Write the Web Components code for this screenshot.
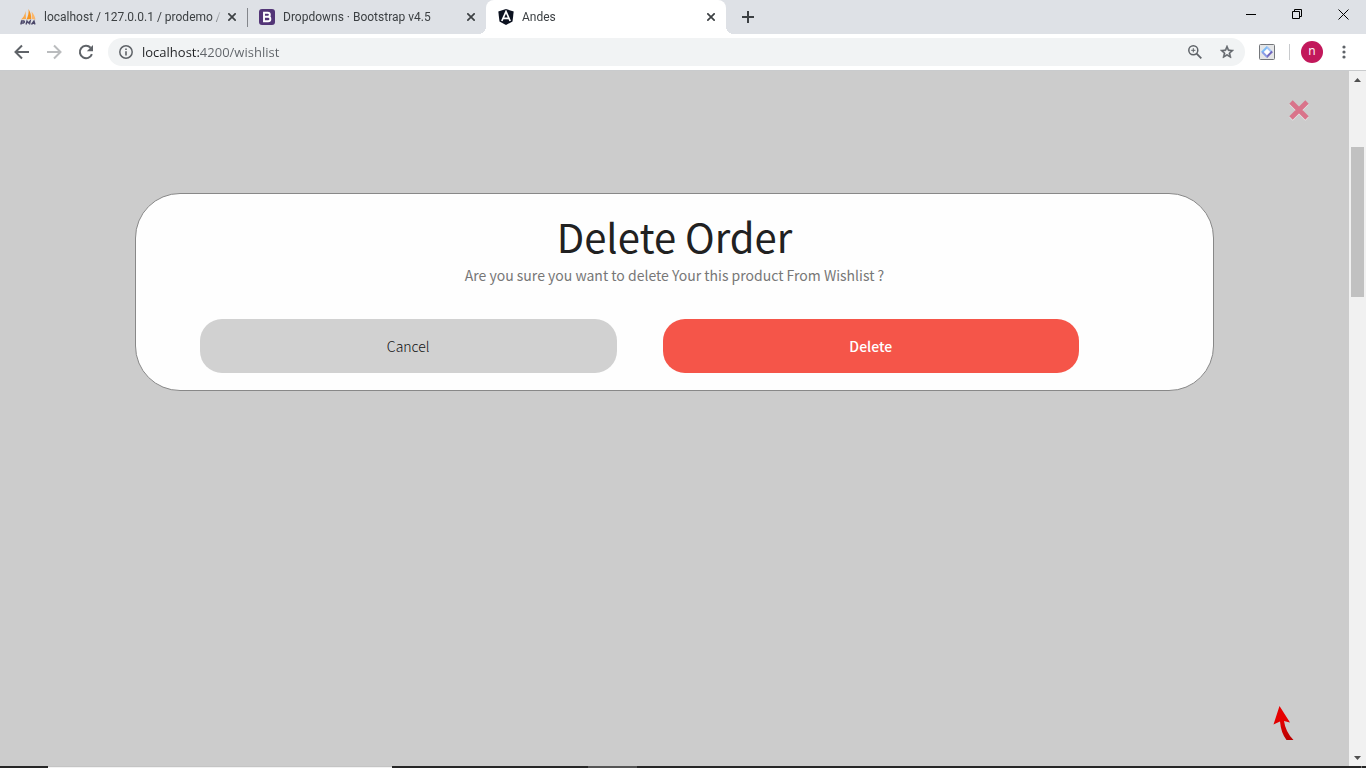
<!DOCTYPE html>
<html lang="en">
<head>
<meta charset="utf-8">
<title>Andes</title>
<style>
  html, body { margin: 0; height: 100%; }
  body { font-family: "Open Sans", "Noto Sans", sans-serif; background: #ccc; overflow: hidden; }
</style>
</head>
<body>
<browser-window>
  <tab-strip slot="tabs">
    <browser-tab label="localhost / 127.0.0.1 / prodemo /" divided>
      <svg slot="icon" width="16" height="16" viewBox="0 0 16 16"><path d="M1 10.500C3 9 5 6 5.500 2L6 10Z" fill="#f9a94b"/><path d="M6.500 10.500C8 7 9 4 8.500 0c2 3 3 7 2.500 10Z" fill="#f7941d"/><path d="M11.500 10C12 7 12 5 11.500 2.500c2 2 3.500 5 4 8Z" fill="#fbb66a"/><path d="M.8 15.500 1.600 12H4q1 1-.5 2H1.500M6 15.500 7 12l1.300 2L10.200 12l-.6 3.500M11.500 15.500 14 12l1 3.500M12.300 14.300h2.500" fill="none" stroke="#4a4668" stroke-width="1.300"/></svg>
    </browser-tab>
    <browser-tab label="Dropdowns · Bootstrap v4.5">
      <svg slot="icon" width="16" height="16" viewBox="0 0 16 16"><rect width="16" height="16" rx="3" fill="#533577"/><path d="M5 3.700h3.800a2 2 0 0 1 0 4.100H5zM5 7.800h4.100a2.200 2.200 0 0 1 0 4.500H5z" fill="none" stroke="#fff" stroke-width="1.900"/></svg>
    </browser-tab>
    <browser-tab label="Andes" active>
      <svg slot="icon" width="16" height="16" viewBox="0 0 16 16"><path d="M8 0 15.700 2.500 14.500 12.500 8 16 1.500 12.500.3 2.500Z" fill="#0c1220"/><path d="M3.800 12 8 2.600 12.200 12M5.500 9.300h5" fill="none" stroke="#fff" stroke-width="1.700"/></svg>
    </browser-tab>
  </tab-strip>
  <browser-toolbar slot="toolbar" url="localhost:4200/wishlist"></browser-toolbar>
  <confirm-overlay>
    <confirm-card>
      <span slot="title">Delete Order</span>
      <span slot="message">Are you sure you want to delete Your this product From Wishlist ?</span>
      <pill-button slot="actions" kind="cancel">Cancel</pill-button>
      <pill-button slot="actions" kind="delete">Delete</pill-button>
    </confirm-card>
  </confirm-overlay>
  <page-scrollbar slot="scrollbar"></page-scrollbar>
  <task-bar slot="taskbar"></task-bar>
</browser-window>

<script>
const RESET = `
  :host, *, *::before, *::after { box-sizing: border-box; }
  button { margin: 0; padding: 0; border: 0; background: none; color: inherit; font: inherit; cursor: pointer; }
  svg { display: block; }
`;
const define = (name, css, html) => customElements.define(name, class extends HTMLElement {
  constructor() {
    super();
    const text = html.replace(/\{(\w+)\}/g, (_, key) => this.getAttribute(key) || '');
    this.attachShadow({ mode: 'open' }).innerHTML = `<style>${RESET}${css}</style>${text}`;
  }
});

define('browser-window', `
  :host { display: grid; height: 100vh; grid-template: auto auto minmax(0, 1fr) auto / minmax(0, 1fr) auto; }
  slot { display: block; min-width: 0; }
  slot[name=tabs], slot[name=toolbar], slot[name=taskbar] { grid-column: 1 / -1; }
  slot:not([name]), slot[name=scrollbar] { display: grid; min-height: 0; }
`, `
  <slot name="tabs"></slot>
  <slot name="toolbar"></slot>
  <slot></slot>
  <slot name="scrollbar"></slot>
  <slot name="taskbar"></slot>
`);

define('tab-strip', `
  :host { display: flex; height: 34px; padding-left: 8px; background: #dee1e6; color: #3c4043; }
  .add { width: 28px; height: 34px; margin-left: 8px; display: grid; place-items: center; }
  .window { margin-left: auto; display: flex; color: #000; }
  .window button { width: 46px; height: 29px; display: grid; place-items: center; }
`, `
  <slot></slot>
  <button class="add" aria-label="New tab"><svg width="12" height="12" viewBox="0 0 12 12"><path d="M6 0v12M0 6h12" stroke="#3c4043" stroke-width="2"/></svg></button>
  <div class="window">
    <button aria-label="Minimize"><svg width="10" height="11"><path d="M0 5.500h10" stroke="#000"/></svg></button>
    <button aria-label="Restore"><svg width="11" height="11" fill="none" stroke="#000"><path d="M.5 2.500h7v7h-7zM2.500 2.500v-2h7v7h-2"/></svg></button>
    <button aria-label="Close"><svg width="11" height="11"><path d="M.5.500l10 10M10.500.500l-10 10" stroke="#000"/></svg></button>
  </div>
`);

define('browser-tab', `
  :host { display: flex; align-items: center; flex: 0 1 239px; min-width: 0; height: 34px; padding: 0 7px 0 12px; position: relative; font-size: 12px; }
  .label { flex: 1; min-width: 0; margin: 0 2px 0 8px; overflow: hidden; white-space: nowrap; line-height: 20px; font-family: Roboto, sans-serif; -webkit-mask-image: linear-gradient(to left, transparent, #000 10px); mask-image: linear-gradient(to left, transparent, #000 10px); }
  button { flex: none; width: 16px; height: 16px; display: grid; place-items: center; }
  :host([divided])::after { content: ""; position: absolute; right: -1px; top: 8px; width: 1px; height: 19px; background: #83868b; }
  :host([active]) { background: #fff; border-radius: 8px 8px 0 0; flex-basis: 240px; }
  :host([active])::before, :host([active])::after { content: ""; position: absolute; bottom: 0; width: 8px; height: 8px; }
  :host([active])::before { right: 100%; background: radial-gradient(circle at 0 0, transparent 8px, #fff 8px); }
  :host([active])::after { left: 100%; background: radial-gradient(circle at 100% 0, transparent 8px, #fff 8px); }
`, `
  <slot name="icon"></slot>
  <span class="label">{label}</span>
  <button aria-label="Close tab"><svg width="8" height="8" viewBox="0 0 8 8"><path d="M.3.300l7.400 7.400M7.700.300.300 7.700" stroke="#3c4043" stroke-width="1.700"/></svg></button>
`);

define('browser-toolbar', `
  :host { display: flex; align-items: center; height: 37px; padding: 0 6px; background: #fff; border-bottom: 1px solid #c9cbcd; }
  button { flex: none; width: 32px; height: 32px; display: grid; place-items: center; }
  .address { flex: 1; min-width: 0; display: flex; align-items: center; height: 28px; margin: 0 6px; padding: 0 2px 0 10px; border-radius: 14px; background: #f1f3f4; }
  .address .info { width: 16px; margin-right: 8px; }
  input { flex: 1; min-width: 0; height: 20px; padding: 0; border: 0; outline: 0; color: #5f6368; font: 13px/20px "Open Sans", sans-serif; -webkit-text-fill-color: transparent; background: linear-gradient(90deg, #202124 57px, #5f6368 57px) text; -webkit-background-clip: text; }
  .rule { width: 1px; height: 16px; margin: 0 6px; background: #c8cacd; }
  .avatar span { width: 22px; height: 22px; border-radius: 50%; background: #c2185b; color: #fff; font-size: 12px; line-height: 20px; text-align: center; }
`, `
  <button aria-label="Back"><svg width="16" height="16" viewBox="0 0 16 16" fill="none" stroke="#5f6368" stroke-width="2"><path d="M15 8H2M8 1.500 1.500 8 8 14.500"/></svg></button>
  <button aria-label="Forward"><svg width="16" height="16" viewBox="0 0 16 16" fill="none" stroke="#babcbe" stroke-width="2"><path d="M1 8h13M8 1.500 14.500 8 8 14.500"/></svg></button>
  <button aria-label="Reload"><svg width="16" height="16" viewBox="0 0 16 16"><path d="M13.900 10.200A6.200 6.200 0 1 1 12.600 3.800" fill="none" stroke="#5f6368" stroke-width="2"/><path d="M15 1v6.200H8.800Z" fill="#5f6368"/></svg></button>
  <div class="address">
    <button class="info" aria-label="Site information"><svg width="14" height="14" viewBox="0 0 14 14"><circle cx="7" cy="7" r="6.200" fill="none" stroke="#5f6368" stroke-width="1.500"/><path d="M7 6.200v4.300M7 3.500v1.500" stroke="#5f6368" stroke-width="1.600"/></svg></button>
    <input type="text" aria-label="Address" value="{url}">
    <button aria-label="Zoom"><svg width="14" height="14" viewBox="0 0 14 14" fill="none" stroke="#5f6368"><circle cx="5.300" cy="5.300" r="4.500" stroke-width="1.500"/><path d="M8.600 8.600 13.300 13.300" stroke-width="1.800"/><path d="M5.300 3.200v4.200M3.200 5.300h4.200"/></svg></button>
    <button aria-label="Bookmark"><svg width="16" height="16" viewBox="0 0 24 24"><path d="M22 9.240l-7.190-.62L12 2 9.190 8.630 2 9.240l5.460 4.730L5.820 21 12 17.270 18.180 21l-1.630-7.030L22 9.240zM12 15.400l-3.760 2.270 1-4.280-3.320-2.880 4.380-.38L12 6.100l1.710 4.040 4.380.38-3.320 2.880 1 4.280L12 15.400z" fill="#5f6368" stroke="#5f6368" stroke-width=".8"/></svg></button>
  </div>
  <button aria-label="Extension"><svg width="16" height="16" viewBox="0 0 16 16"><rect x=".5" y=".5" width="15" height="15" rx="1" fill="#e4e5e7" stroke="#74777b"/><path d="M8 3.300 12.700 8 8 12.700 3.300 8Z" fill="#fff"/><path d="M2.800 8.500 8.500 2.800" stroke="#7cbcf8" stroke-width="2"/><path d="M8 3.300 12.700 8" stroke="#a3c3f5" stroke-width="2"/><path d="M13.200 7.500 7.500 13.200" stroke="#7066bd" stroke-width="2"/><path d="M8 12.700 3.300 8" stroke="#8a9be6" stroke-width="2"/></svg></button>
  <span class="rule"></span>
  <button class="avatar" aria-label="Profile"><span>n</span></button>
  <button aria-label="Menu"><svg width="4" height="14" fill="#5f6368"><circle cx="2" cy="2" r="1.600"/><circle cx="2" cy="7" r="1.600"/><circle cx="2" cy="12" r="1.600"/></svg></button>
`);

define('confirm-overlay', `
  :host { display: flex; flex-direction: column; align-items: center; position: relative; padding-top: 122px; background: #ccc; font-family: "Noto Sans CJK SC", sans-serif; }
  .close { position: absolute; top: 27px; right: 38px; }
  .top { position: absolute; right: 54px; bottom: 26px; }
`, `
  <slot></slot>
  <button class="close" aria-label="Close"><svg width="24" height="24" viewBox="0 0 24 24" stroke-width="4.800"><path d="M4 5 20 21M20 5 4 21" stroke="#e6e6e6"/><path d="M4 4 20 20M20 4 4 20" stroke="#d9748a"/></svg></button>
  <button class="top" aria-label="Back to top"><svg width="22" height="36" viewBox="0 0 22 36"><defs><linearGradient id="red" x2="0" y2="1"><stop offset=".4" stop-color="#e60000"/><stop offset="1" stop-color="#b80000"/></linearGradient></defs><path d="M6.500 2 17 18.500 11 17Q12.500 28 20.500 36H13.500Q8 29 7 17.500L.5 20.500Z" fill="url(#red)"/></svg></button>
`);

define('confirm-card', `
  :host { display: block; width: 80%; padding: 14px 0 17px; border: 1px solid #888; border-radius: 45px; background: #fefefe; text-align: center; }
  h1 { margin: 0; color: #212121; font-size: 40px; line-height: 56px; font-weight: 400; }
  p { margin: 0 0 33px; color: #777; font-size: 14px; line-height: 22px; }
  .actions { display: grid; grid-template-columns: 1fr 1fr; gap: 46px; padding: 0 134px 0 64px; }
`, `
  <h1><slot name="title"></slot></h1>
  <p><slot name="message"></slot></p>
  <div class="actions"><slot name="actions"></slot></div>
`);

define('pill-button', `
  :host { display: block; }
  button { width: 100%; height: 54px; border-radius: 22px; font-size: 14px; line-height: 20px; }
  :host([kind=cancel]) button { background: #d1d1d1; color: #111; font-weight: 300; }
  :host([kind=delete]) button { background: #f55549; color: #fff; font-weight: 500; }
`, `<button type="button"><slot></slot></button>`);

define('page-scrollbar', `
  :host { display: grid; grid-template-rows: 17px 59fr 150fr 452fr 17px; width: 17px; background: #f1f1f1; }
  button { display: grid; place-items: center; }
  .thumb { grid-row: 3; margin: 0 2px; background: #c1c1c1; }
  .down { grid-row: 5; }
`, `
  <button aria-label="Scroll up"><svg width="7" height="4"><path d="M0 4 3.500 0 7 4Z" fill="#505050"/></svg></button>
  <div class="thumb"></div>
  <button class="down" aria-label="Scroll down"><svg width="7" height="4"><path d="M0 0 3.500 4 7 0Z" fill="#505050"/></svg></button>
`);

define('task-bar', `
  :host { display: flex; height: 2px; padding-left: 48px; background: #262626; }
  .search { width: 344px; border-top: 1px solid #c4c4c4; background: #f2f2f2; }
  .app { width: 49px; margin-left: 196px; background: #555; }
  .desktop { width: 1px; margin: 0 4px 0 auto; background: #777; }
`, `<div class="search"></div><div class="app"></div><div class="desktop"></div>`);
</script>
</body>
</html>
